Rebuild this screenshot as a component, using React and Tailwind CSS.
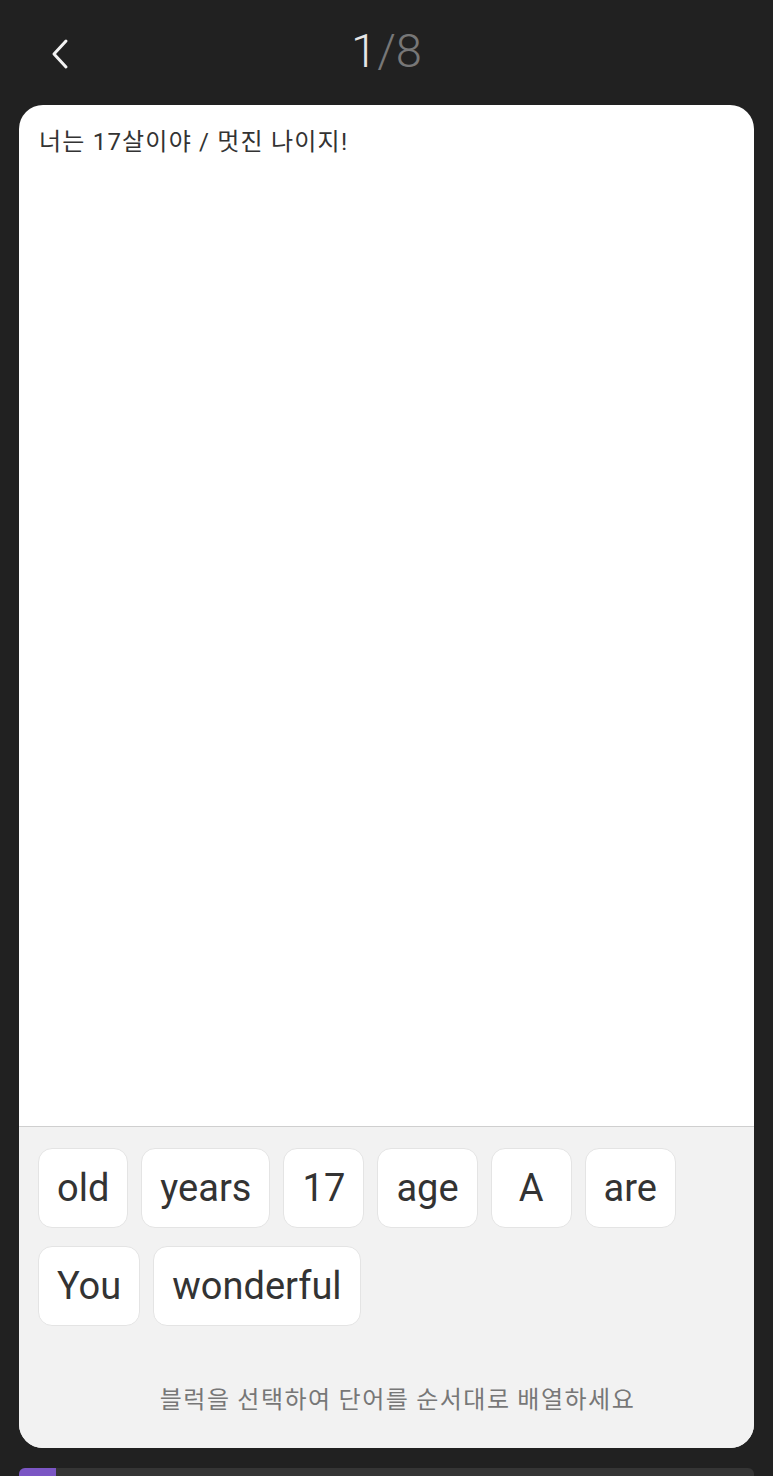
import React from 'react';

const words = ['old', 'years', '17', 'age', 'A', 'are', 'You', 'wonderful'];

const WordChip = ({ word }) => (
  <button className="h-[80px] min-w-[81px] px-[18px] rounded-[14px] bg-white border border-[#e4e4e4] text-[38px] leading-none text-[#333333] font-['Roboto',sans-serif]">
    {word}
  </button>
);

const App = () => {
  return (
    <div className="w-[773px] h-[1476px] overflow-hidden bg-[#212121] flex flex-col">
      {/* Header */}
      <header className="h-[105px] shrink-0 relative flex items-center justify-center">
        <button aria-label="back" className="absolute left-[50px] top-[38px]">
          <svg width="20" height="32" viewBox="0 0 20 32" fill="none">
            <polyline points="16,3 4,16 16,29" stroke="#f2f2f2" strokeWidth="3" strokeLinecap="round" strokeLinejoin="round" />
          </svg>
        </button>
        <div className="font-['Roboto',sans-serif] font-light text-[47px] leading-none -mt-[4px]">
          <span className="text-[#e6e6e6]">1</span>
          <span className="text-[#777777]">/8</span>
        </div>
      </header>

      {/* Card */}
      <section className="mx-[19px] h-[1343px] shrink-0 rounded-[24px] overflow-hidden flex flex-col bg-white">
        <div className="flex-1 px-[20px] pt-[25px]">
          <p className="text-[24px] tracking-[1.2px] leading-none text-[#333333] font-['Roboto','Noto_Sans_CJK_KR',sans-serif]">
            너는 17살이야 / 멋진 나이지!
          </p>
        </div>
        <div className="h-[322px] border-t border-[#cfcfcf] bg-[#f2f2f2] flex flex-col">
          <div className="flex flex-wrap gap-x-[13px] gap-y-[18px] px-[19px] pt-[21px]">
            {words.map((w) => (
              <WordChip key={w} word={w} />
            ))}
          </div>
          <p className="mt-auto mb-[38px] pl-[22px] text-center text-[24px] tracking-[1.5px] leading-none text-[#777777] font-['Noto_Sans_CJK_KR',sans-serif]">
            블럭을 선택하여 단어를 순서대로 배열하세요
          </p>
        </div>
      </section>

      {/* Progress */}
      <div className="mx-[19px] mt-[20px] h-[12px] shrink-0 rounded-t-[6px] bg-[#353535] overflow-hidden">
        <div className="h-full w-[37px] bg-[#7b56c4]" />
      </div>
    </div>
  );
};

export default App;
